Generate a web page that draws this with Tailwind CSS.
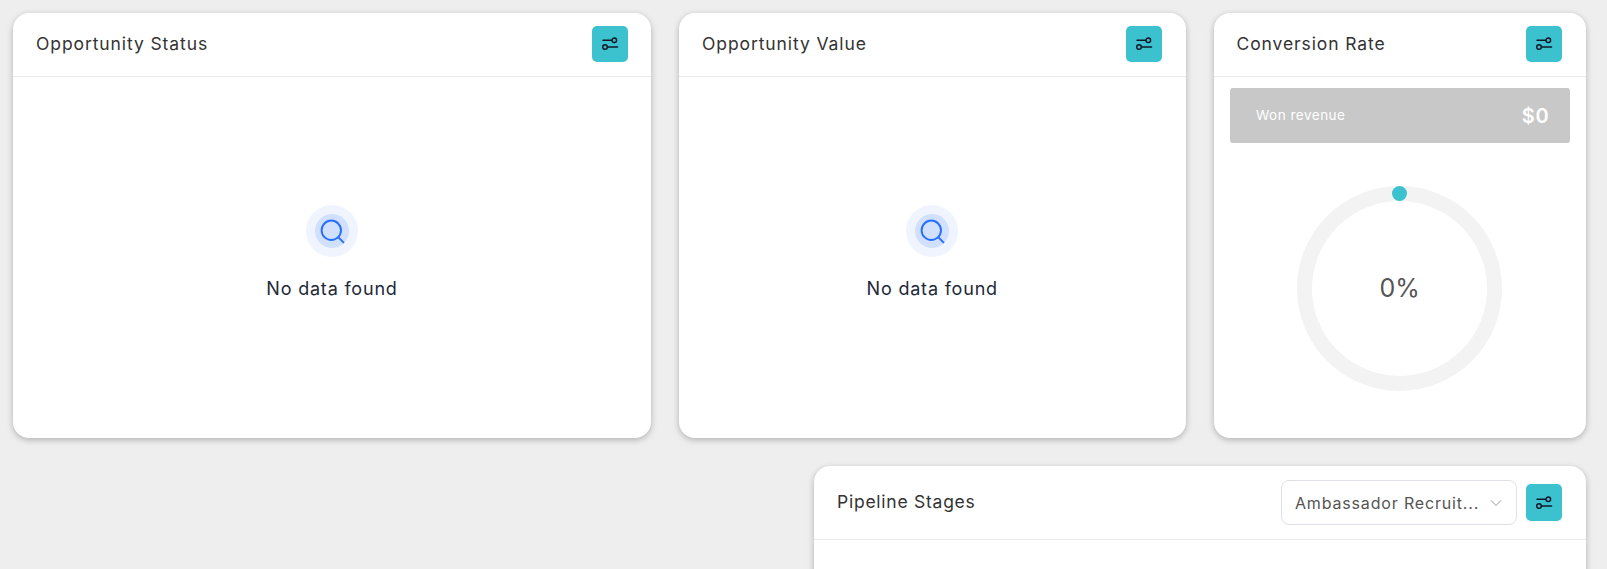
<!DOCTYPE html>
<html lang="en">
<head>
    <meta charset="UTF-8">
    <title>Opportunity Dashboard</title>
    <script src="https://cdn.jsdelivr.net/npm/@tailwindcss/browser@4"></script>
</head>
<body class="bg-[#eeeeee] font-['Inter',sans-serif] text-[#333333]">
<main class="h-[569px] overflow-hidden pl-[13px] pr-[21px] pt-[13px]">
    <div class="grid grid-cols-[638px_506.5px_372.5px] gap-x-[28px]">

        <!-- Opportunity Status -->
        <section class="h-[425px] flex flex-col rounded-[16px] bg-white shadow-[0_2px_6px_rgba(0,0,0,0.25)]">
            <header class="h-[64px] shrink-0 flex items-center justify-between pl-[23px] pr-[23.5px] pb-px border-b border-[#eaeaec]">
                <h2 class="text-[17.5px] tracking-[0.9px]">Opportunity Status</h2>
                <button class="w-[36px] h-[36px] flex items-center justify-center rounded-[5px] bg-[#3cc2ce]">
                    <svg class="w-[18px] h-[18px]" viewBox="0 0 18 18" fill="none" stroke="#111827" stroke-width="1.5" stroke-linecap="round">
                        <path d="M2 5.3h8.6"/><circle cx="13.3" cy="5.3" r="2.3"/>
                        <path d="M16.5 12H6.7"/><circle cx="4" cy="12" r="2.3"/>
                    </svg>
                </button>
            </header>
            <div class="flex-1 flex flex-col items-center pt-[128px]">
                <div class="w-[52px] h-[52px] flex items-center justify-center rounded-full bg-[#eff4ff]">
                    <div class="w-[34px] h-[34px] flex items-center justify-center rounded-full bg-[#d1e0ff]">
                        <svg class="w-[26px] h-[26px]" viewBox="0 0 26 26" fill="none" stroke="#2970ff" stroke-width="2" stroke-linecap="round">
                            <circle cx="12.3" cy="12.3" r="9.7"/><path d="M19.4 19.4l5 5"/>
                        </svg>
                    </div>
                </div>
                <p class="mt-[20px] text-[18px] leading-[24px] tracking-[0.8px] text-[#1d2939]">No data found</p>
            </div>
        </section>

        <!-- Opportunity Value -->
        <section class="h-[425px] flex flex-col rounded-[16px] bg-white shadow-[0_2px_6px_rgba(0,0,0,0.25)]">
            <header class="h-[64px] shrink-0 flex items-center justify-between pl-[23px] pr-[23.5px] pb-px border-b border-[#eaeaec]">
                <h2 class="text-[17.5px] tracking-[0.9px]">Opportunity Value</h2>
                <button class="w-[36px] h-[36px] flex items-center justify-center rounded-[5px] bg-[#3cc2ce]">
                    <svg class="w-[18px] h-[18px]" viewBox="0 0 18 18" fill="none" stroke="#111827" stroke-width="1.5" stroke-linecap="round">
                        <path d="M2 5.3h8.6"/><circle cx="13.3" cy="5.3" r="2.3"/>
                        <path d="M16.5 12H6.7"/><circle cx="4" cy="12" r="2.3"/>
                    </svg>
                </button>
            </header>
            <div class="flex-1 flex flex-col items-center pt-[128px]">
                <div class="w-[52px] h-[52px] flex items-center justify-center rounded-full bg-[#eff4ff]">
                    <div class="w-[34px] h-[34px] flex items-center justify-center rounded-full bg-[#d1e0ff]">
                        <svg class="w-[26px] h-[26px]" viewBox="0 0 26 26" fill="none" stroke="#2970ff" stroke-width="2" stroke-linecap="round">
                            <circle cx="12.3" cy="12.3" r="9.7"/><path d="M19.4 19.4l5 5"/>
                        </svg>
                    </div>
                </div>
                <p class="mt-[20px] text-[18px] leading-[24px] tracking-[0.8px] text-[#1d2939]">No data found</p>
            </div>
        </section>

        <!-- Conversion Rate -->
        <section class="h-[425px] flex flex-col rounded-[16px] bg-white shadow-[0_2px_6px_rgba(0,0,0,0.25)]">
            <header class="h-[64px] shrink-0 flex items-center justify-between pl-[23px] pr-[24px] pb-px border-b border-[#eaeaec]">
                <h2 class="text-[17.5px] tracking-[0.9px]">Conversion Rate</h2>
                <button class="w-[36px] h-[36px] flex items-center justify-center rounded-[5px] bg-[#3cc2ce]">
                    <svg class="w-[18px] h-[18px]" viewBox="0 0 18 18" fill="none" stroke="#111827" stroke-width="1.5" stroke-linecap="round">
                        <path d="M2 5.3h8.6"/><circle cx="13.3" cy="5.3" r="2.3"/>
                        <path d="M16.5 12H6.7"/><circle cx="4" cy="12" r="2.3"/>
                    </svg>
                </button>
            </header>
            <div class="flex-1 px-[16.5px] pt-[11px]">
                <div class="h-[55px] flex items-center justify-between pl-[26px] pr-[20px] rounded-[3px] bg-[#c8c8c8] text-white">
                    <span class="text-[13.5px] tracking-[0.5px]">Won revenue</span>
                    <span class="text-[20px] font-semibold tracking-[0.8px]">$0</span>
                </div>
                <div class="relative w-[205px] h-[205px] mx-auto mt-[43px] flex items-center justify-center rounded-full border-[15px] border-[#f3f3f3]">
                    <span class="text-[25px] text-[#555555]">0%</span>
                    <span class="absolute top-[-15.5px] left-[80px] w-[15px] h-[15px] rounded-full bg-[#3cc2ce]"></span>
                </div>
            </div>
        </section>
    </div>

    <!-- Pipeline Stages -->
    <section class="w-[772px] ml-auto mt-[28px] h-[200px] rounded-t-[16px] bg-white shadow-[0_2px_6px_rgba(0,0,0,0.25)]">
        <header class="h-[74px] flex items-center justify-between pl-[23px] pr-[24px] border-b border-[#eaeaec]">
            <h2 class="text-[17.5px] tracking-[0.75px]">Pipeline Stages</h2>
            <div class="flex items-center gap-[9px]">
                <div class="w-[236px] h-[45px] flex items-center justify-between pl-[13px] pr-[13px] rounded-[8px] border border-[#e0e0e8] bg-white">
                    <span class="text-[16px] tracking-[0.83px] text-[#555555] whitespace-nowrap">Ambassador Recruit...</span>
                    <svg class="w-[14px] h-[14px]" viewBox="0 0 14 14" fill="none" stroke="#c4c4c4" stroke-width="1.2">
                        <path d="M2 4.5l5 5 5-5"/>
                    </svg>
                </div>
                <button class="w-[36px] h-[37px] flex items-center justify-center rounded-[5px] bg-[#3cc2ce]">
                    <svg class="w-[18px] h-[18px]" viewBox="0 0 18 18" fill="none" stroke="#111827" stroke-width="1.5" stroke-linecap="round">
                        <path d="M2 5.3h8.6"/><circle cx="13.3" cy="5.3" r="2.3"/>
                        <path d="M16.5 12H6.7"/><circle cx="4" cy="12" r="2.3"/>
                    </svg>
                </button>
            </div>
        </header>
    </section>
</main>
</body>
</html>
